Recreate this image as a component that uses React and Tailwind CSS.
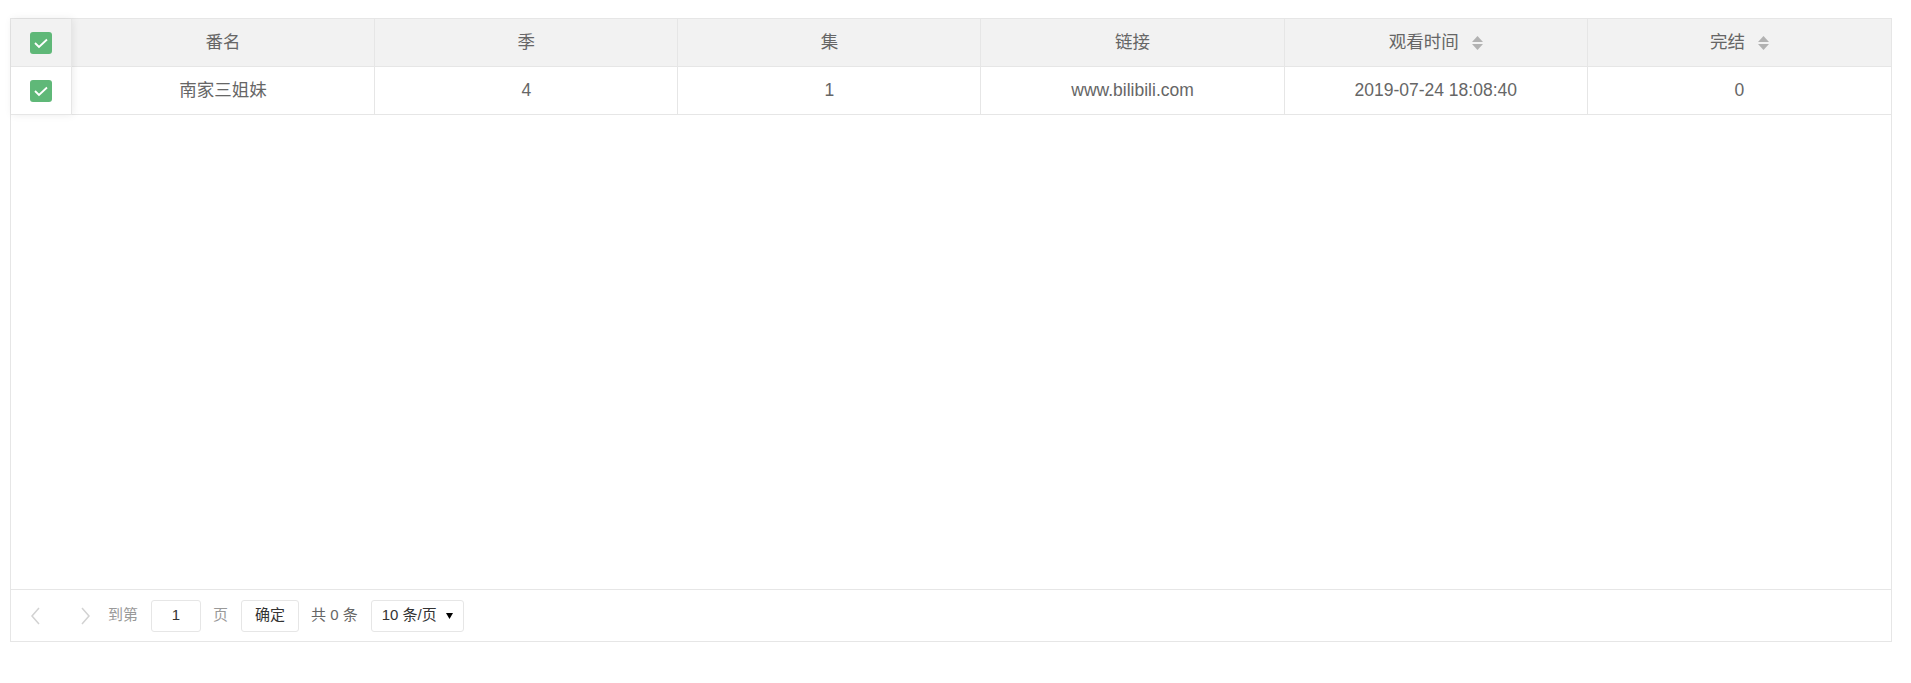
import React from 'react';

const COLUMNS = [
  { key: 'name', title: '番名' },
  { key: 'season', title: '季' },
  { key: 'episode', title: '集' },
  { key: 'link', title: '链接' },
  { key: 'time', title: '观看时间', sort: true },
  { key: 'done', title: '完结', sort: true },
];

const ROWS = [
  { name: '南家三姐妹', season: 4, episode: 1, link: 'www.bilibili.com', time: '2019-07-24 18:08:40', done: 0 },
];

function CheckBox() {
  return (
    <div className="w-[22px] h-[22px] rounded-[3px] bg-[#5FB878]">
      <svg width="22" height="22" viewBox="0 0 22 22">
        <polyline points="5,11 9,15 17,7.5" fill="none" stroke="#fff" strokeWidth="1.8" />
      </svg>
    </div>
  );
}

function SortIcon() {
  return (
    <span className="ml-[13px] flex flex-col gap-[2px]">
      <svg width="11" height="6" viewBox="0 0 11 6"><polygon points="5.5,0 11,6 0,6" fill="#b2b2b2" /></svg>
      <svg width="11" height="6" viewBox="0 0 11 6"><polygon points="0,0 11,0 5.5,6" fill="#b2b2b2" /></svg>
    </span>
  );
}

function Arrow({ dir }) {
  const pts = dir === 'left' ? '9,1 2,9 9,17' : '3,1 10,9 3,17';
  return (
    <svg width="12" height="18" viewBox="0 0 12 18">
      <polyline points={pts} fill="none" stroke="#d2d2d2" strokeWidth="1.5" />
    </svg>
  );
}

export default function App() {
  return (
    <div className="w-[1911px] h-[683px] bg-white pt-[18px] pl-[10px] text-[#666] font-['Liberation_Sans','Noto_Sans_CJK_SC',sans-serif]">
      <div className="w-[1882px] border border-[#e6e6e6] flex flex-col">
        {/* table head + rows */}
        <div className="flex">
          {/* fixed checkbox column */}
          <div className="w-[61px] shrink-0 relative z-10 bg-white shadow-[1px_0_8px_rgba(0,0,0,0.08)]">
            <div className="h-[48px] bg-[#f2f2f2] border-b border-r border-[#e6e6e6] flex items-center justify-center">
              <CheckBox />
            </div>
            {ROWS.map((_, i) => (
              <div key={i} className="h-[48px] border-b border-r border-[#e6e6e6] flex items-center justify-center">
                <CheckBox />
              </div>
            ))}
          </div>

          <div className="flex-1 min-w-0">
            <div className="h-[48px] bg-[#f2f2f2] border-b border-[#e6e6e6] grid grid-cols-6">
              {COLUMNS.map((c, i) => (
                <div
                  key={c.key}
                  className={`flex items-center justify-center text-[17.5px] ${i < 5 ? 'border-r border-[#e6e6e6]' : ''}`}
                >
                  <span>{c.title}</span>
                  {c.sort && <SortIcon />}
                </div>
              ))}
            </div>
            {ROWS.map((r, ri) => (
              <div key={ri} className="h-[48px] border-b border-[#e6e6e6] grid grid-cols-6">
                {COLUMNS.map((c, i) => (
                  <div
                    key={c.key}
                    className={`flex items-center justify-center text-[17.5px] ${i < 5 ? 'border-r border-[#e6e6e6]' : ''}`}
                  >
                    {r[c.key]}
                  </div>
                ))}
              </div>
            ))}
          </div>
        </div>

        {/* empty body */}
        <div className="h-[474px]" />

        {/* pagination */}
        <div className="h-[52px] border-t border-[#e6e6e6] flex items-center pl-[19px] text-[15px]">
          <Arrow dir="left" />
          <span className="ml-[37px]"><Arrow dir="right" /></span>
          <span className="ml-[17px] text-[#999]">到第</span>
          <div className="ml-[13px] w-[50px] h-[32px] border border-[#e6e6e6] rounded-[3px] flex items-center justify-center text-[#333]">1</div>
          <span className="ml-[12px] text-[#999]">页</span>
          <div className="ml-[13px] w-[58px] h-[32px] border border-[#e6e6e6] rounded-[3px] flex items-center justify-center text-[#333]">确定</div>
          <span className="ml-[12px] text-[#666]">共 0 条</span>
          <div className="ml-[13px] w-[93px] h-[32px] border border-[#e6e6e6] rounded-[3px] flex items-center pl-[10px] text-[#333]">
            <span>10 条/页</span>
            <svg className="ml-auto mr-[10px]" width="7" height="6" viewBox="0 0 7 6">
              <polygon points="0,0 7,0 3.5,6" fill="#000" />
            </svg>
          </div>
        </div>
      </div>
    </div>
  );
}
